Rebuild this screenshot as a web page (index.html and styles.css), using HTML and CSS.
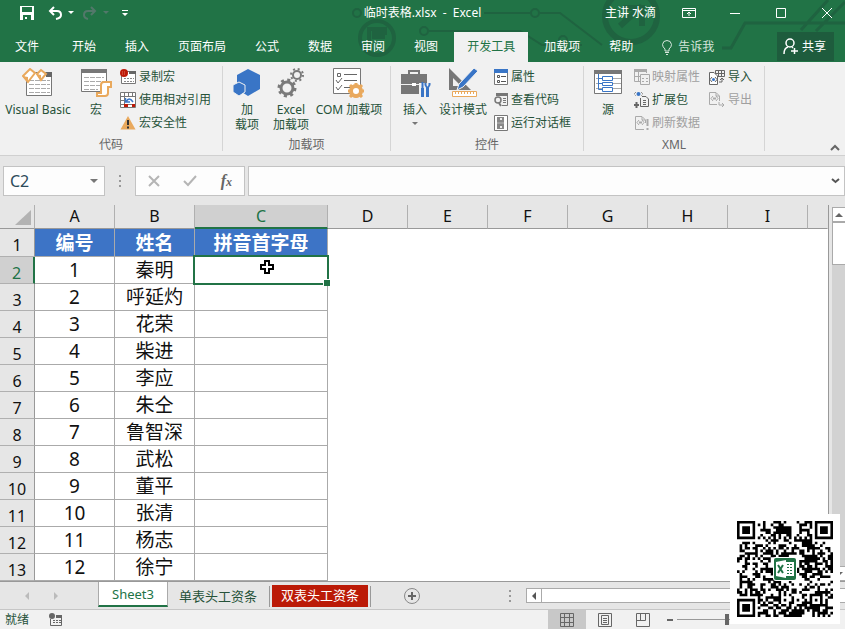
FILE: index.html
```
<!DOCTYPE html>
<html lang="zh-CN">
<head>
<meta charset="utf-8">
<title>临时表格.xlsx - Excel</title>
<link rel="stylesheet" href="styles.css">
</head>
<body>
<div class="app">
<header class="top">
  <svg class="circuit" width="500" height="62" viewBox="345 0 500 62" fill="none" stroke="#1f6340" stroke-width="2" aria-hidden="true">
    <circle cx="357" cy="13" r="4"/><circle cx="377" cy="38" r="17" stroke-width="4"/>
    <path d="M369 47V29H385V33H374V37H385" stroke-width="4"/>
    <path d="M484 13H530M540 13H560L602 45"/><circle cx="535" cy="13" r="4"/>
    <circle cx="424" cy="31" r="4"/><path d="M429 31H520L542 45H554M570 45H582"/><circle cx="563" cy="40" r="4"/>
    <circle cx="631" cy="16" r="26" stroke-width="6"/><path d="M620 26L642 6M623 8H642V26" stroke-width="6"/>
    <path d="M722 48H731L745 23H845M801 30L828 0M816 31L845 2" stroke-width="3"/>
  </svg>
  <div class="titlebar">
    <div class="quick">
      <button aria-label="保存"><svg width="14" height="14" viewBox="0 0 14 14"><path fill="#fff" fill-rule="evenodd" d="M0 0H14V14H0ZM2 1V6H12V1ZM3 9V14H11V9ZM5 11H7V13H5Z"/></svg></button>
      <button aria-label="撤消" class="undo"><svg width="26" height="14" viewBox="0 0 26 14" fill="none" stroke="#fff" stroke-width="2"><path d="M6 1L2 5L6 9M2 5H9Q13 5 13 9Q13 12 8 13"/><path d="M20 5H26L23 8Z" fill="#fff" stroke="none"/></svg></button>
      <button aria-label="恢复"><svg width="26" height="14" viewBox="0 0 26 14" fill="none" stroke="#52786a" stroke-width="2"><path d="M8 1L12 5L8 9M12 5H5Q1 5 1 9Q1 12 5 13"/><path d="M20 5H26L23 8Z" fill="#52786a" stroke="none"/></svg></button>
      <button aria-label="自定义快速访问工具栏" class="more"><svg width="6" height="7" viewBox="0 0 6 7" fill="#fff"><path d="M0 0H6V1H0ZM0 3H6L3 6Z"/></svg></button>
    </div>
    <div class="title">临时表格.xlsx&nbsp; -&nbsp; Excel</div>
    <div class="window">
      <span class="user">主讲 水滴</span>
      <button aria-label="功能区显示选项"><svg width="14" height="12" viewBox="0 0 14 12" fill="none" stroke="#fff"><path d="M.5 1.5H13.5V10.5H.5ZM.5 3.5H13.5M7 9V5M5 7L7 5L9 7"/></svg></button>
      <button aria-label="最小化"><svg width="14" height="12" viewBox="0 0 14 12" stroke="#fff"><path d="M2 6.5H12"/></svg></button>
      <button aria-label="最大化"><svg width="14" height="12" viewBox="0 0 14 12" fill="none" stroke="#fff"><path d="M2.500 1.500H11.500V10.500H2.500Z"/></svg></button>
      <button aria-label="关闭"><svg width="14" height="12" viewBox="0 0 14 12" stroke="#fff"><path d="M2 1L12 11M12 1L2 11"/></svg></button>
    </div>
  </div>
  <nav class="tabs">
    <button class="file">文件</button><button>开始</button><button>插入</button><button>页面布局</button><button>公式</button><button>数据</button><button>审阅</button><button>视图</button><button class="active">开发工具</button><button>加载项</button><button>帮助</button>
    <button class="tell"><svg width="10" height="15" viewBox="0 0 10 15" fill="none" stroke="#d5e5dc"><path d="M3 11V9Q.5 7 .5 4.500Q1 .5 5 .5Q9 .5 9.500 4.500Q9.500 7 7 9V11ZM3 12.500H7M4 14.500H6"/></svg>告诉我</button>
    <button class="share"><svg width="16" height="17" viewBox="0 0 16 17" fill="none" stroke="#fff" stroke-width="1.500"><circle cx="7" cy="5" r="4"/><path d="M1 16Q1 10 5 9M9 9L10 10M8 13H15M11.500 10V16"/></svg>共享</button>
  </nav>
</header>

<section class="ribbon">
  <div class="group">
    <div class="tools">
      <button class="big w76"><svg width="32" height="30" viewBox="0 0 32 30"><path d="M4.500 4.500H29.500V27.500H4.500Z" fill="#fff" stroke="#777"/><path d="M24 4H30V9H24Z" fill="#666"/><path d="M7 12.500H28M7 16.500H28M7 20.500H28M7 24.500H28" stroke="#aaa" stroke-dasharray="5 1"/><path d="M1 8L8 1L13 5L6 14Z" fill="#fff" stroke="#e9a95d" stroke-width="2"/><path d="M0 8L6 9V15Z" fill="#e9a95d"/><path d="M15 6L19 2L24 6L19 12Z" fill="#fff" stroke="#e9a95d" stroke-width="2"/><path d="M14 6L19 7V13Z" fill="#e9a95d"/></svg><span>Visual Basic</span></button>
      <button class="big w40"><svg width="32" height="30" viewBox="0 0 32 30"><path d="M1.500 1.500H26.500V23.500H1.500Z" fill="#fff" stroke="#777"/><path d="M1 1H27V5H1Z" fill="#777"/><path d="M4 9.500H24M4 13.500H24M4 17.500H20M4 21.500H18" stroke="#aaa" stroke-dasharray="5 1"/><path d="M21 17Q21 14 24 14H31V19H28V25Q28 28 25 28H17V25H21Z" fill="#fff" stroke="#e9a95d" stroke-width="2"/></svg><span>宏</span></button>
      <div class="list">
        <button><svg width="16" height="16" viewBox="0 0 16 16"><path d="M1.500 2.500H15.500V14.500H1.500Z" fill="#fff" stroke="#777"/><path d="M9 2H16V5H9Z" fill="#666"/><path d="M4 9.500H14M4 12.500H14" stroke="#888" stroke-dasharray="2 1"/><circle cx="4" cy="4" r="4" fill="#bd1a08"/><path d="M2 3H6M2 5H6" stroke="#db705e" stroke-dasharray="1 1"/></svg>录制宏</button>
        <button><svg width="16" height="16" viewBox="0 0 16 16"><path d="M.5 .5H15.500V15.500H.5ZM.5 4.500H15.500M4.500 .5V15.500M8.500 .5V4M12.500 .5V15.500M.5 8.500H4M.5 12.500H15.500" fill="#fff" stroke="#777"/><path d="M5 5H15V12H5Z" fill="#fff"/><path d="M4 12H8V15H4ZM12 12H15V15H12Z" fill="#bd1a08"/><path d="M5.500 6V10H10M6 10Q9 4 13 10" stroke="#3975c6" stroke-width="1.500" fill="none"/></svg>使用相对引用</button>
        <button><svg width="16" height="16" viewBox="0 0 16 16"><path d="M8 1L15.500 14.500H.5Z" fill="#e9a95d"/><path d="M8 5V10M8 11.500V13.500" stroke="#333" stroke-width="2"/></svg>宏安全性</button>
      </div>
    </div>
    <h2>代码</h2>
  </div>
  <div class="group">
    <div class="tools">
      <button class="big w48"><svg width="32" height="30" viewBox="0 0 32 30" fill="#3975c6"><path d="M17 1L29 7V21L17 28L6 21V7Z"/><path d="M8 14L14 17V24L8 28L2 24V17Z" stroke="#f1f1f1"/></svg><span>加<br>载项</span></button>
      <button class="big w40"><svg width="32" height="30" viewBox="0 0 32 30" fill="none" stroke="#7a7a7a"><circle cx="12" cy="20" r="6" stroke-width="3"/><circle cx="12" cy="20" r="8" stroke-width="3" stroke-dasharray="3 3.280"/><circle cx="22" cy="7" r="4" stroke-width="2"/><circle cx="22" cy="7" r="6" stroke-width="2" stroke-dasharray="2 2.710"/></svg><span>Excel<br>加载项</span></button>
      <button class="big w76"><svg width="32" height="30" viewBox="0 0 32 30"><path d="M.5 .5H27.500V25.500H.5Z" fill="#fff" stroke="#777"/><path d="M4.500 5.500H7.500V8.500H4.500ZM11 6.500H24M11 12.500H24M11 19.500H18M3 12L5 15L9 10M3 19L5 22L9 17" fill="none" stroke="#666"/><circle cx="23" cy="23" r="5" fill="#fff" stroke="#e9a95d" stroke-width="4"/><path d="M23 15V19M23 27V31M15 23H19M27 23H31M17 17L20 20M26 26L29 29M29 17L26 20M17 29L20 26" stroke="#e9a95d" stroke-width="3"/></svg><span>COM 加载项</span></button>
    </div>
    <h2>加载项</h2>
  </div>
  <div class="group">
    <div class="tools">
      <button class="big w48"><svg width="32" height="30" viewBox="0 0 32 30"><path d="M10 6V3H20V6" fill="none" stroke="#777" stroke-width="2"/><path d="M2 6H28V26H2Z" fill="#777"/><path d="M2 16.500H28" stroke="#f1f1f1"/><path d="M13 15H17V18H13Z" fill="#fff"/><path d="M20 15H31V30H20Z" fill="#f1f1f1"/><path d="M23.500 14V20M26.500 15V17Q28.500 22 30.500 17V15" stroke="#3975c6" stroke-width="2" fill="none"/><path d="M23.500 20V29M28.500 20V29" stroke="#3975c6" stroke-width="3"/></svg><span>插入</span><i class="caret"></i></button>
      <button class="big w48"><svg width="32" height="30" viewBox="0 0 32 30"><path fill="#777" fill-rule="evenodd" d="M2 0L24 22H2ZM6 10V18H14Z"/><path d="M10 22L12 16L27 0L31 3L16 19Z" fill="#3975c6" stroke="#f1f1f1"/><path d="M5.500 23.500H29.500V28.500H5.500Z" fill="#fff" stroke="#e9a95d"/><path d="M8 25H29" stroke="#e9a95d" stroke-width="2" stroke-dasharray="1 2"/></svg><span>设计模式</span></button>
      <div class="list shift">
        <button><svg width="14" height="16" viewBox="0 0 14 16"><path d="M.5 .5H13.500V15.500H.5Z" fill="#fff" stroke="#777"/><path d="M0 0H14V4H0Z" fill="#3975c6"/><path d="M3.500 6.500H5.500V8.500H3.500ZM3.500 11.500H5.500V13.500H3.500ZM7 7.500H12M7 12.500H12" stroke="#555" fill="none"/></svg>属性</button>
        <button><svg width="14" height="16" viewBox="0 0 14 16" fill="none" stroke="#777"><path d="M2.500 4V1.500H13.500V13.500H8M9 6.500H12M9 8.500H12M9 10.500H12"/><path d="M2 1H14V4H2Z" fill="#777" stroke="none"/><circle cx="4" cy="8" r="3" stroke-width="1.500"/><path d="M5 11L7 14" stroke-width="2"/></svg>查看代码</button>
        <button><svg width="14" height="16" viewBox="0 0 14 16"><path d="M.5 .5H13.500V15.500H.5Z" fill="#fff" stroke="#777"/><path d="M3 2H10V14H3Z" fill="#888"/><path d="M6 3H8V5H6ZM6 11H8V13H6Z" fill="#eee"/><path d="M3 8H10" stroke="#bbb"/></svg>运行对话框</button>
      </div>
    </div>
    <h2>控件</h2>
  </div>
  <div class="group">
    <div class="tools">
      <button class="big w48"><svg width="30" height="30" viewBox="0 0 30 30"><path d="M1.500 2.500H28.500V25.500H1.500Z" fill="#fff" stroke="#777"/><path d="M1 2H29V6H1Z" fill="#777"/><path d="M3 10.500H28M3 15.500H28M3 20.500H28" stroke="#aaa"/><path d="M5.500 6V21.500H10M5.500 10.500H10M5.500 15.500H10" fill="none" stroke="#3975c6"/><path d="M9.500 8.500H19.500V12.500H9.500ZM9.500 14.500H19.500V17.500H9.500ZM9.500 19.500H19.500V23.500H9.500Z" fill="#fff" stroke="#3975c6"/></svg><span>源</span></button>
      <div class="list xml">
        <button disabled><svg width="16" height="16" viewBox="0 0 16 16" fill="none" stroke="#aaa"><path d="M.5 .5H12.500V4M.5 .5V12.500H6M4.500 3V12M.5 7.500H6"/><path d="M0 0H13V3H0Z" fill="#aaa" stroke="none"/><path d="M6.500 5.500H15.500V15.500H6.500ZM8 9.500H10M12 9.500H14M8 12.500H10M12 12.500H14"/></svg>映射属性</button>
        <button><svg width="16" height="16" viewBox="0 0 16 16" fill="none" stroke="#666"><path d="M8 4.500H12L14.500 7V14.500H6.500V6M9 8.500H12M9 10.500H12M9 12.500H12"/><path d="M0 13H5M2.500 10V16" stroke-width="2"/><path d="M2 0L0 2L2 4M7 0L9 2L7 4" stroke-dasharray="1 1"/><circle cx="4.500" cy="2" r="2" fill="#3975c6" stroke="none"/></svg>扩展包</button>
        <button disabled><svg width="16" height="16" viewBox="0 0 16 16" fill="none" stroke="#aaa"><path d="M10 14.500H1.500V1.500H8L11.500 5V8M8 2V5H11M5 5L3 7.500L5 10M8 5L10 7.500L8 10"/><path d="M13.500 4V11M13.500 13V15M5 7.500H8" stroke-width="2"/></svg>刷新数据</button>
      </div>
      <div class="list io">
        <button><svg width="16" height="16" viewBox="0 0 16 16" fill="none" stroke="#666"><path d="M6.500 1.500H15.500V7.500H6.500ZM9.500 1V8M12.500 1V8M6 4.500H16"/><path d="M.5 3.500H5L8.500 7V15.500H.5Z" fill="#fff"/><path d="M3 8L1 10.500L3 13M6 8L8 10.500L6 13M10 13H13V9M11 11L13 9L15 11"/><circle cx="4.500" cy="10.500" r="1.500" fill="#3975c6" stroke="none"/></svg>导入</button>
        <button disabled><svg width="16" height="16" viewBox="0 0 16 16" fill="none" stroke="#aaa"><path d="M8 12.500H.5V.5H7L10.500 4V9M7 1V4H10M4 4L2 6.500L4 9M7 4L9 6.500L7 9M10 10V13H15M13 11L15 13L13 15"/><path d="M4 6.500H7" stroke-width="2"/></svg>导出</button>
      </div>
    </div>
    <h2>XML</h2>
  </div>
  <button class="collapse" aria-label="折叠功能区"><svg width="10" height="7" viewBox="0 0 10 7" fill="none" stroke="#666" stroke-width="2"><path d="M1 6L5 2L9 6"/></svg></button>
</section>

<section class="formula">
  <div class="namebox"><input aria-label="名称框" value="C2"><i class="caret"></i></div>
  <svg class="grip" width="3" height="12" viewBox="0 0 3 12" fill="#999"><path d="M0 0H2V2H0ZM0 5H2V7H0ZM0 10H2V12H0Z"/></svg>
  <div class="fx">
    <button aria-label="取消"><svg width="12" height="12" viewBox="0 0 12 12" stroke="#b5b5b5" stroke-width="2"><path d="M1 1L11 11M11 1L1 11"/></svg></button>
    <button aria-label="输入"><svg width="14" height="12" viewBox="0 0 14 12" fill="none" stroke="#b5b5b5" stroke-width="2"><path d="M1 6L5 10L13 1"/></svg></button>
    <button aria-label="插入函数" class="fn">f<small>x</small></button>
  </div>
  <div class="entry"><input aria-label="编辑栏"><svg width="9" height="6" viewBox="0 0 9 6" fill="none" stroke="#555" stroke-width="2"><path d="M1 1L4.500 4L8 1"/></svg></div>
</section>

<main class="workspace">
  <table class="grid">
    <colgroup><col class="c-head"><col class="c-std"><col class="c-std"><col class="c-wide"><col class="c-std"><col class="c-std"><col class="c-std"><col class="c-std"><col class="c-std"><col class="c-std"><col></colgroup>
    <thead><tr><th class="corner"><svg width="16" height="15" viewBox="0 0 16 15"><path d="M16 0V15H0Z" fill="#b3b3b3"/></svg></th><th>A</th><th>B</th><th class="sel">C</th><th>D</th><th>E</th><th>F</th><th>G</th><th>H</th><th>I</th><th class="last"></th></tr></thead>
    <tbody>
      <tr class="heading"><th>1</th><td>编号</td><td>姓名</td><td>拼音首字母</td><td colspan="7" class="blank"></td></tr>
      <tr><th class="sel">2</th><td>1</td><td>秦明</td><td class="current"><div class="marker"></div><svg class="cursor" width="16" height="16" viewBox="0 0 16 16"><path d="M6 2H10V6H14V10H10V14H6V10H2V6H6Z" fill="#fff" stroke="#000" stroke-width="2"/></svg></td><td colspan="7" class="blank"></td></tr>
      <tr><th>3</th><td>2</td><td>呼延灼</td><td></td><td colspan="7" class="blank"></td></tr>
      <tr><th>4</th><td>3</td><td>花荣</td><td></td><td colspan="7" class="blank"></td></tr>
      <tr><th>5</th><td>4</td><td>柴进</td><td></td><td colspan="7" class="blank"></td></tr>
      <tr><th>6</th><td>5</td><td>李应</td><td></td><td colspan="7" class="blank"></td></tr>
      <tr><th>7</th><td>6</td><td>朱仝</td><td></td><td colspan="7" class="blank"></td></tr>
      <tr><th>8</th><td>7</td><td>鲁智深</td><td></td><td colspan="7" class="blank"></td></tr>
      <tr><th>9</th><td>8</td><td>武松</td><td></td><td colspan="7" class="blank"></td></tr>
      <tr><th>10</th><td>9</td><td>董平</td><td></td><td colspan="7" class="blank"></td></tr>
      <tr><th>11</th><td>10</td><td>张清</td><td></td><td colspan="7" class="blank"></td></tr>
      <tr><th>12</th><td>11</td><td>杨志</td><td></td><td colspan="7" class="blank"></td></tr>
      <tr><th>13</th><td>12</td><td>徐宁</td><td></td><td colspan="7" class="blank"></td></tr>
    </tbody>
  </table>
  <div class="vscroll">
    <button aria-label="向上滚动"><svg width="8" height="4" viewBox="0 0 8 4"><path d="M0 4L4 0L8 4Z" fill="#666"/></svg></button>
    <div class="thumb"></div>
    <div class="track"></div>
    <button aria-label="向下滚动"><svg width="8" height="4" viewBox="0 0 8 4"><path d="M0 0L4 4L8 0Z" fill="#666"/></svg></button>
  </div>
</main>

<nav class="sheets">
  <div class="arrows"><svg width="34" height="8" viewBox="0 0 34 8" fill="#bbb"><path d="M5 0V8L1 4ZM30 0V8L34 4Z"/></svg></div>
  <button class="active">Sheet3</button>
  <button class="plain">单表头工资条</button>
  <button class="red">双表头工资条</button>
  <button class="add" aria-label="新工作表"><svg width="16" height="16" viewBox="0 0 16 16" fill="none" stroke="#888"><circle cx="8" cy="8" r="7.500"/><path d="M8 4V12M4 8H12" stroke="#666" stroke-width="2"/></svg></button>
  <svg class="grip" width="3" height="12" viewBox="0 0 3 12" fill="#999"><path d="M0 0H2V2H0ZM0 5H2V7H0ZM0 10H2V12H0Z"/></svg>
  <div class="hscroll"><button aria-label="向左滚动"><svg width="4" height="8" viewBox="0 0 4 8"><path d="M4 0V8L0 4Z" fill="#555"/></svg></button></div>
</nav>

<footer class="status">
  <span class="ready">就绪</span>
  <svg width="14" height="14" viewBox="0 0 14 14" fill="none" stroke="#666"><path d="M1.500 6V12.500H12.500V4.500H7"/><path d="M4 7.500H12M4 9.500H12" stroke-dasharray="2 1"/><circle cx="3" cy="3" r="3" fill="#666" stroke="none"/><path d="M7 2H13V5H7Z" fill="#666" stroke="none"/></svg>
  <div class="views">
    <button class="on" aria-label="普通"><svg width="14" height="14" viewBox="0 0 14 14" fill="none" stroke="#666"><path d="M.5 .5H13.500V13.500H.5ZM4.500 0V14M9.500 0V14M0 4.500H14M0 9.500H14"/></svg></button>
    <button aria-label="页面布局视图"><svg width="14" height="14" viewBox="0 0 14 14" fill="none" stroke="#666"><path d="M.5 .5H13.500V13.500H.5ZM3.500 2.500H10.500V11.500H3.500ZM5 5.500H9M5 7.500H9M5 9.500H9"/></svg></button>
    <button aria-label="分页预览"><svg width="14" height="14" viewBox="0 0 14 14" fill="none" stroke="#666"><path d="M.5 .5H13.500V13.500H.5ZM4.500 0V7.500M9.500 0V7.500M0 7.500H9.500"/></svg></button>
    <button class="minus" aria-label="缩小"><svg width="6" height="2" viewBox="0 0 6 2"><path d="M0 0H6V2H0Z" fill="#666"/></svg></button>
    <input type="range" aria-label="缩放" min="0" max="100" value="50">
  </div>
</footer>
<div class="qr"><svg id="qr" width="96" height="96" viewBox="0 0 37 37" role="img" aria-label="二维码"></svg>
  <svg class="badge" width="24" height="24" viewBox="0 0 24 24"><rect width="24" height="24" rx="3" fill="#fff"/><rect x="1" y="1" width="22" height="22" rx="2" fill="#217346"/><path d="M12 5H21V19H12Z" fill="#fff"/><path d="M14 7.500H20M14 10.500H20M14 13.500H20M14 16.500H20" stroke="#217346" stroke-dasharray="2 1"/><path d="M3 5L13 3V21L3 19Z" fill="#fff"/><path d="M5 8L10 16M10 8L5 16" stroke="#217346" stroke-width="2"/></svg>
</div>
</div>
<script src="qr.js"></script>
</body>
</html>
```
FILE: styles.css
```
* { box-sizing: border-box; }
body { margin: 0; background: #e6e6e6; color: #444; font: 12px/16px "Noto Sans", "Noto Sans CJK SC", sans-serif; }
button { margin: 0; padding: 0; border: 0; background: none; color: inherit; font: inherit; white-space: nowrap; }
input { border: 0; outline: 0; background: none; font: inherit; color: inherit; }
svg { display: block; flex: none; }
h2 { margin: 0; font: inherit; }
.app { position: relative; min-height: 100vh; display: flex; flex-direction: column; overflow: hidden; }
.caret { border: 4px solid transparent; border-top-color: #777; border-bottom: 0; }

.top { position: relative; background: #217346; color: #fff; }
.circuit { position: absolute; right: 0; top: 0; }
.titlebar { position: relative; display: grid; grid-template-columns: 1fr auto 1fr; align-items: center; height: 26px; }
.quick { display: flex; align-items: center; padding-left: 20px; }
.quick .undo { margin: 0 9px 0 14px; }
.quick .more { margin-left: 13px; }
.window { display: flex; justify-content: flex-end; align-items: center; gap: 32px; padding-right: 11px; }
.user { margin-right: -6px; }
.tabs { position: relative; display: flex; gap: 3px; height: 36px; padding: 6px 11px 0 2px; }
.tabs button { padding: 0 13px; }
.tabs .file { margin-right: 4px; }
.tabs .active { background: #f1f1f1; color: #217346; }
.tabs .tell { display: flex; align-items: center; gap: 6px; color: #d5e5dc; }
.tabs .share { display: flex; align-items: center; gap: 3px; margin-left: auto; padding: 0 8px 0 6px; background: #1e5c3d; height: 29px; }

.ribbon { display: flex; height: 94px; background: #f1f1f1; border-bottom: 1px solid #d0d0d0; color: #265239; }
.group { position: relative; display: flex; flex-direction: column; padding: 3px 1px 0 0; }
.group::after { content: ""; position: absolute; right: 0; top: 4px; bottom: 4px; border-right: 1px solid #d5d5d5; }
.group:nth-child(1) { width: 223px; }
.group:nth-child(2) { width: 168px; }
.group:nth-child(3) { width: 193px; }
.group:nth-child(4) { width: 181px; }
.group h2 { text-align: center; color: #666; line-height: 20px; }
.tools { display: flex; height: 72px; }
.big { display: flex; flex-direction: column; align-items: center; padding-top: 3px; line-height: 15px; }
.big span { margin-top: 4px; }
.big .caret { margin-top: 5px; border-width: 3px; border-bottom: 0; }
.w76 { width: 76px; }
.w48 { width: 48px; }
.w40 { width: 40px; }
.list { padding-left: 4px; }
.list.shift { padding-left: 7px; }
.list.xml { padding-left: 2px; }
.list.io { padding-left: 9px; }
.list button { display: flex; align-items: center; gap: 3px; height: 23px; }
.list.xml button { gap: 2px; }
.list button:disabled { color: #a0a0a0; }
.collapse { align-self: flex-end; margin-left: auto; padding: 0 5px 4px; }

.formula { display: flex; height: 49px; padding: 10px 0 9px 3px; font-size: 16px; }
.namebox, .fx, .entry { display: flex; align-items: center; background: #fdfdfd; border: 1px solid #c3c3c3; }
.namebox { width: 102px; padding: 0 6px; }
.namebox input { flex: 1; min-width: 0; padding: 0; color: #2d4a5a; }
.grip { align-self: center; }
.formula .grip { margin: 0 13px 0 14px; }
.fx { width: 110px; padding: 0 12px; justify-content: space-between; }
.fn { font: italic bold 16px "Liberation Serif", serif; color: #666; }
.fn small { font-size: 12px; }
.entry { flex: 1; margin-left: 3px; padding-right: 4px; }
.entry input { flex: 1; min-width: 0; }

.workspace { display: flex; }
.grid { flex: 1; table-layout: fixed; width: 0; border-collapse: separate; border-spacing: 0; margin-right: 3px; border-right: 1px solid #999; font-size: 19px; color: #111; background: #fff; }
.c-head { width: 35px; }
.c-std { width: 80px; }
.c-wide { width: 133px; }
.grid th { font-weight: 400; font-size: 16px; padding: 0; background: #e6e6e6; border-right: 1px solid #b0b0b0; border-bottom: 1px solid #b0b0b0; line-height: 20px; }
.grid thead th { height: 24px; padding-bottom: 1px; border-bottom-color: #999; }
.grid thead .last { border-right-color: transparent; }
.grid thead .sel { background: #d0d0d0; color: #217346; border-bottom: 2px solid #217346; }
.grid tbody th { padding-top: 5px; border-right-color: #999; }
.grid tbody .sel { background: #d0d0d0; color: #217346; border-right: 2px solid #217346; }
.corner svg { margin: 2px 3px 0 auto; }
.grid td { height: 27px; padding: 0; text-align: center; line-height: 26px; border-right: 1px solid #aaa; border-bottom: 1px solid #aaa; }
.grid .blank { border: 0; }
.grid .heading td { height: 28px; }
.heading td:not(.blank) { background: #3d74c6; color: #fff; font-weight: 700; }
.grid .current { position: relative; }
.marker { position: absolute; inset: -2px -2px -2px -2px; border: 2px solid #217346; }
.marker::after { content: ""; position: absolute; right: -3px; bottom: -3px; width: 6px; height: 6px; background: #217346; border: solid #fff; border-width: 1px 0 0 1px; }
.cursor { position: absolute; left: 64px; top: 2px; }
.vscroll { display: flex; flex-direction: column; width: 13px; padding-top: 2px; }
.vscroll button { display: grid; place-items: center; height: 15px; background: #fff; border: 1px solid #aaa; border-right: 0; }
.thumb { height: 43px; background: #fff; border: 1px solid #aaa; border-right: 0; }
.track { flex: 1; background: #d2d2d2; }

.sheets { display: flex; align-items: center; height: 29px; border-top: 1px solid #999; border-bottom: 1px solid #c6c6c6; font-size: 13px; color: #265239; }
.arrows { width: 98px; padding-left: 24px; }
.sheets .active { align-self: flex-start; height: 25px; width: 70px; background: #fff; color: #217346; border: solid #aaa; border-width: 0 1px; border-bottom: 2px solid #217346; }
.plain { height: 20px; padding: 0 11px; }
.red { position: relative; height: 22px; margin-left: 4px; padding: 0 9px; background: #bb1a07; color: #fff; }
.red::before, .red::after { content: ""; position: absolute; top: 1px; bottom: 0; left: -3px; border-left: 1px solid #999; }
.red::after { left: auto; right: -3px; }
.plain, .red { line-height: 20px; padding-bottom: 2px; }
.add { margin-left: 36px; }
.sheets .grip { margin-left: auto; margin-right: 14px; }
.hscroll { width: 319px; height: 15px; background: #fff; border: 1px solid #aaa; border-right: 0; }
.hscroll button { display: grid; place-items: center; width: 15px; height: 13px; border-right: 1px solid #aaa; }

.status { flex: 1; display: flex; align-items: center; min-height: 18px; background: #f1f1f1; padding: 0 68px 0 5px; }
.ready { margin-right: 20px; color: #265239; }
.views { display: flex; align-self: stretch; align-items: center; margin-left: auto; }
.views button { display: grid; place-items: center; align-self: stretch; width: 38px; }
.views .on { background: #c8c8c8; }
.views .minus { width: 15px; }
.views input { appearance: none; width: 100px; height: 12px; margin: 0; background: linear-gradient(#999, #999) center / 100% 1px no-repeat; }
.views input::-webkit-slider-thumb { appearance: none; width: 4px; height: 11px; background: #666; }
.qr { position: absolute; right: 5px; bottom: 5px; width: 110px; height: 110px; padding: 7px; background: #fff; }
.badge { position: absolute; left: 43px; top: 43px; }
```
FILE: qr.js
```
// Draws the code's modules: three finder squares, timing lines and a data field.
const size = 37;
let seed = 20177;
const next = () => (seed = (seed * 1103515245 + 12345) % 2147483648) / 2147483648;
const finder = (x, y) => {
  const d = Math.max(Math.abs(x - 3), Math.abs(y - 3));
  return d === 3 || d < 2;
};
let d = "";
for (let y = 0; y < size; y++) {
  for (let x = 0; x < size; x++) {
    let on = next() > 0.5;
    if (x < 8 && y < 8) on = x < 7 && y < 7 && finder(x, y);
    else if (x > 28 && y < 8) on = x > 29 && y < 7 && finder(x - 30, y);
    else if (x < 8 && y > 28) on = x < 7 && y > 29 && finder(x, y - 30);
    else if (x > 27 && x < 33 && y > 27 && y < 33) {
      const r = Math.max(Math.abs(x - 30), Math.abs(y - 30));
      on = r !== 1;
    } else if (x === 6 || y === 6) on = (x + y) % 2 === 0;
    if (on) d += `M${x} ${y}h1v1h-1z`;
  }
}
const path = document.createElementNS("http://www.w3.org/2000/svg", "path");
path.setAttribute("d", d);
document.getElementById("qr").append(path);
```
